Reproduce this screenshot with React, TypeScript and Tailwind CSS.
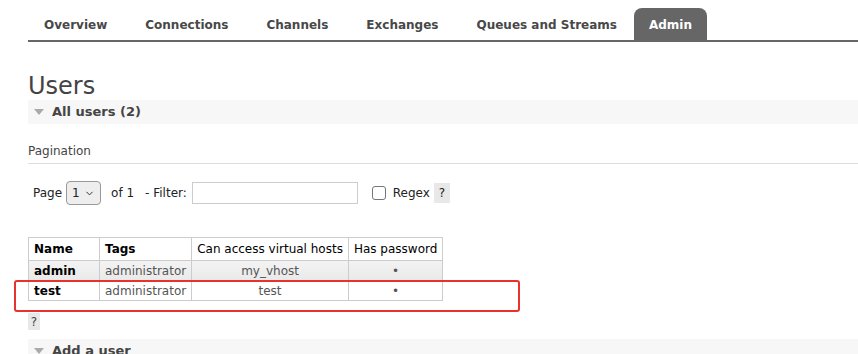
import { ChevronDown } from "lucide-react";

const tabs = ["Overview", "Connections", "Channels", "Exchanges", "Queues and Streams"];

const users = [
  { name: "admin", tags: "administrator", vhosts: "my_vhost", alt: true },
  { name: "test", tags: "administrator", vhosts: "test", alt: false },
];

const Section = ({ title }: { title: string }) => (
  <div className="flex h-6 items-center gap-2 bg-[#f7f7f7] pl-[6px]">
    <span className="h-0 w-0 border-x-[5px] border-t-[6px] border-x-transparent border-t-[#aaa]" />
    <span className="text-[13px] font-bold text-[#444]">{title}</span>
  </div>
);

export default function App() {
  return (
    <div className="relative h-[354px] w-[858px] overflow-hidden bg-white font-['DejaVu_Sans',Verdana,sans-serif] text-[12px] text-[#444]">
      <nav className="ml-[28px] mt-2 flex h-[34px] items-end border-b-2 border-[#666]">
        {tabs.map((t) => (
          <span key={t} className="flex h-8 items-center px-[19px] pt-[1px] text-[12px] font-bold text-[#484848] first:pl-4">
            {t}
          </span>
        ))}
        <span className="-ml-[2px] flex h-8 items-center rounded-t-lg bg-[#666] px-[15px] pt-[1px] text-[12px] font-bold text-white">
          Admin
        </span>
      </nav>

      <div className="pl-[28px]">
        <h1 className="mt-[30px] text-[24px] leading-[28px] text-[#444]">Users</h1>
        <Section title="All users (2)" />

        <div className="mt-[18px] border-b border-[#ddd] pb-[3px] text-[12px] text-[#444]">Pagination</div>

        <div className="mt-[17px] flex items-center pl-[5px] text-[12px] text-[#222]">
          <span>Page</span>
          <span className="ml-1 flex h-6 w-[35px] items-center justify-between rounded border border-[#999] bg-[#eee] px-[5px]">
            1 <ChevronDown size={11} strokeWidth={2} />
          </span>
          <span className="ml-[10px]">of 1</span>
          <span className="ml-[11px]">- Filter:</span>
          <span className="ml-[5px] h-[22px] w-[166px] border border-[#ccc] bg-white" />
          <span className="ml-[14px] h-[14px] w-[14px] rounded-[3px] border border-[#767676]" />
          <span className="ml-[7px]">Regex</span>
          <span className="ml-[4px] flex h-5 w-4 items-center justify-center bg-[#e8e8e8] text-[12px]">?</span>
        </div>

        <table className="mt-[32px] border-collapse border border-[#ccc] text-[12px]">
          <thead>
            <tr className="h-[23px]">
              <th className="border border-[#ccc] px-[5px] text-left font-bold text-black">Name</th>
              <th className="border border-[#ccc] px-[5px] text-left font-bold text-black">Tags</th>
              <th className="border border-[#ccc] px-[5px] font-normal text-black">Can access virtual hosts</th>
              <th className="border border-[#ccc] px-[5px] font-normal text-black">Has password</th>
            </tr>
          </thead>
          <tbody>
            {users.map((u) => (
              <tr key={u.name} className={u.alt ? "h-5 bg-gradient-to-b from-[#f3f3f3] to-[#e9e9e9]" : "h-5 bg-white"}>
                <td className="w-[71px] border border-[#ccc] px-[5px] font-bold text-black">{u.name}</td>
                <td className="border border-[#ccc] px-[5px] text-[#555]">{u.tags}</td>
                <td className="border border-[#ccc] px-[5px] text-center text-[#555]">{u.vhosts}</td>
                <td className="border border-[#ccc] px-[5px] text-center text-[#555]">•</td>
              </tr>
            ))}
          </tbody>
        </table>

        <span className="mt-3 flex h-[17px] w-3 items-center justify-center bg-[#e8e8e8] text-[12px]">?</span>

        <div className="mt-[9px]">
          <Section title="Add a user" />
        </div>
      </div>

      <div className="absolute left-[14px] top-[280px] h-[32px] w-[506px] rounded-[3px] border-2 border-[#e8322e]" />
    </div>
  );
}
